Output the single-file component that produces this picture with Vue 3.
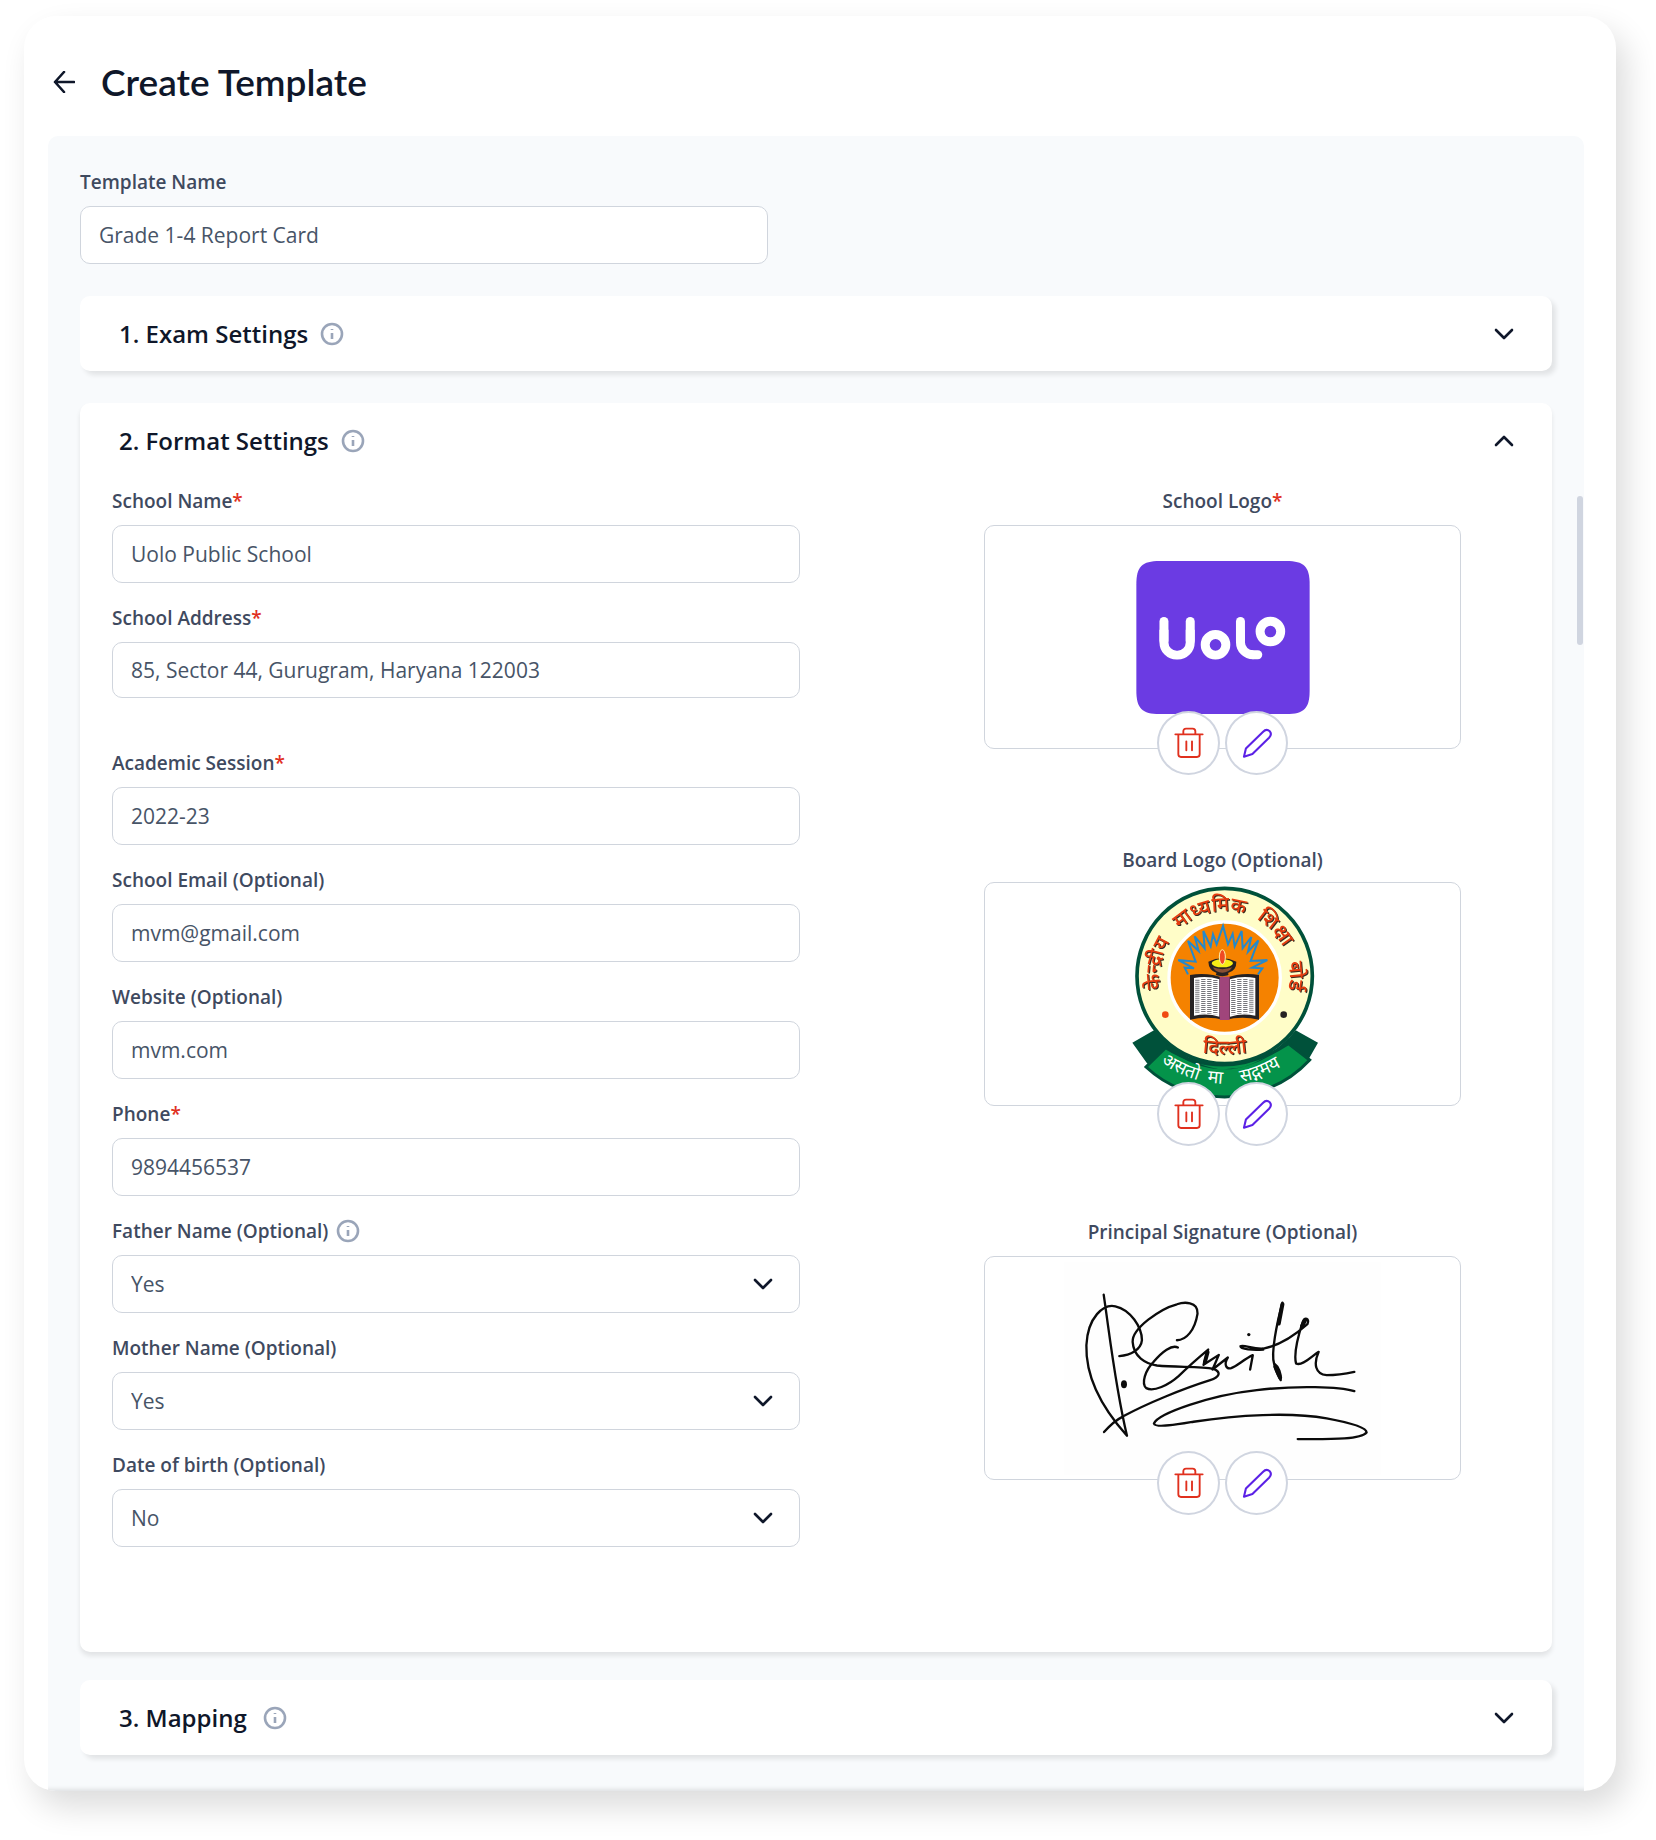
<template>
  <main class="template-page">
    <header class="page-header">
      <button class="back-btn" type="button" aria-label="Go back">
        <svg viewBox="0 0 22 22" width="22" height="22">
          <path d="M21 11H2M11 1L2 11l9 10" />
        </svg>
      </button>
      <h1>Create Template</h1>
    </header>

    <form class="panel" @submit.prevent>
      <div class="field template-name">
        <label for="templateName">Template Name</label>
        <input id="templateName" v-model="form.templateName" type="text" />
      </div>

      <section class="card">
        <button class="card-header" type="button" aria-expanded="false">
          <span>1. Exam Settings</span>
          <svg class="info" viewBox="0 0 24 24">
            <circle cx="12" cy="12" r="10" />
            <path d="M12 11v6M12 7v1" />
          </svg>
          <svg class="chevron" viewBox="0 0 20 12"><path d="M2 2l8 8 8-8" /></svg>
        </button>
      </section>

      <section class="card card-open">
        <button class="card-header" type="button" aria-expanded="true">
          <span>2. Format Settings</span>
          <svg class="info" viewBox="0 0 24 24">
            <circle cx="12" cy="12" r="10" />
            <path d="M12 11v6M12 7v1" />
          </svg>
          <svg class="chevron" viewBox="0 0 20 12"><path d="M2 10l8-8 8 8" /></svg>
        </button>

        <div class="card-body">
          <div class="fields">
            <div v-for="field in fields" :key="field.key" class="field" :class="field.key">
              <label :for="field.key">
                <span>{{ field.label }}<b v-if="field.required">*</b></span>
                <svg v-if="field.info" class="info" viewBox="0 0 24 24">
                  <circle cx="12" cy="12" r="10" />
                  <path d="M12 11v6M12 7v1" />
                </svg>
              </label>
              <div v-if="field.options" class="select-wrap">
                <select :id="field.key" v-model="form[field.key]">
                  <option v-for="option in field.options" :key="option">{{ option }}</option>
                </select>
                <svg class="chevron" viewBox="0 0 20 12"><path d="M2 2l8 8 8-8" /></svg>
              </div>
              <input v-else :id="field.key" v-model="form[field.key]" :type="field.type" />
            </div>
          </div>

          <div class="uploads">
            <div v-for="upload in uploads" :key="upload.key" class="upload" :class="upload.key">
              <h3>{{ upload.label }}<b v-if="upload.required">*</b></h3>
              <div class="preview">
                <!-- Uolo mark -->
                <svg
                  v-if="upload.key === 'school-logo'"
                  class="school-mark"
                  viewBox="528 273 521 460"
                  role="img"
                  aria-label="Uolo"
                >
                  <defs>
                    <clipPath id="bowl"><rect x="590" y="480" width="130" height="100" /></clipPath>
                    <clipPath id="hook"><rect x="820" y="480" width="60" height="100" /></clipPath>
                  </defs>
                  <path
                    fill="#6b3be3"
                    d="M598 273H979C1032 273 1049 290 1049 343V663C1049 716 1032 733 979 733H598C545 733 528 716 528 663V343C528 290 545 273 598 273Z"
                  />
                  <g fill="none" stroke="#fff" stroke-width="27" stroke-linecap="round">
                    <line x1="611" y1="455" x2="611" y2="512" />
                    <line x1="690" y1="455" x2="690" y2="512" />
                    <rect x="611" y="420" width="79" height="136" rx="38" clip-path="url(#bowl)" />
                    <circle cx="766" cy="525" r="31" />
                    <line x1="841" y1="455" x2="841" y2="512" />
                    <rect x="841" y="420" width="90" height="135" rx="38" clip-path="url(#hook)" />
                    <line x1="880" y1="555" x2="893" y2="555" />
                    <circle cx="931" cy="485" r="31" />
                  </g>
                </svg>

                <!-- Board emblem -->
                <svg
                  v-else-if="upload.key === 'board-logo'"
                  class="board-mark"
                  viewBox="52 45 570 648"
                  role="img"
                  aria-label="Board emblem"
                >
                  <defs>
                    <path id="ring" d="M342 510A195 195 0 0 1 342 120A195 195 0 0 1 342 510" />
                    <path id="cityLine" d="M240 538Q342 562 444 536" />
                    <path id="mottoLine" d="M140 568Q340 710 545 564" />
                  </defs>
                  <path fill="#00513a" d="M65 515L130 478L200 540L110 578ZM622 515L555 478L500 540L592 568Z" />
                  <path
                    fill="#04934a"
                    stroke="#00513a"
                    stroke-width="9"
                    d="M165 530Q342 640 533 518L597 567Q500 672 342 678Q200 676 106 588Z"
                  />
                  <path fill="#00513a" d="M165 500Q340 690 535 500L530 520Q342 665 168 530Z" />
                  <circle cx="342" cy="315" r="263" fill="#fffdc8" stroke="#00513a" stroke-width="11" />
                  <circle cx="342" cy="320" r="167" fill="#f58200" stroke="#fff" stroke-width="10" />
                  <polyline
                    fill="none"
                    stroke="#2489cc"
                    stroke-width="6"
                    points="232,310 222,290 250,292 203,267 255,272 232,210 264,240 252,196 282,232 278,180 300,226 307,190 318,220 337,165 352,220 366,188 372,226 393,180 396,232 422,198 412,242 443,208 420,270 470,267 424,290 455,292 442,310"
                  />
                  <path fill="#262223" d="M238 312Q290 302 342 322Q394 302 445 312V446Q394 434 342 447Q290 434 238 446Z" />
                  <path fill="#fff" d="M250 321Q290 313 326 325V437Q290 426 250 434ZM358 325Q394 313 434 321V434Q394 426 358 437Z" />
                  <g stroke="#77777c" stroke-width="13" stroke-dasharray="3 3">
                    <path d="M260 326V428M278 324V427M296 324V428M314 327V430M368 327V430M386 324V428M404 324V427M422 326V428" />
                  </g>
                  <path fill="#a0457b" d="M327 317H357V447H327Z" />
                  <path fill="#262223" d="M293 272Q335 252 377 272Q378 298 352 306Q360 314 335 316Q308 314 318 306Q294 298 293 272Z" />
                  <path fill="#8a5033" d="M306 289Q335 300 365 289Q354 305 335 305Q316 305 306 289Z" />
                  <ellipse cx="335" cy="277" rx="32" ry="12" fill="#f7ee16" />
                  <ellipse cx="335" cy="258" rx="9" ry="22" fill="#f04a23" stroke="#fff3b0" stroke-width="3" />
                  <g class="ring-text" text-anchor="middle">
                    <text><textPath href="#ring" startOffset="342">केन्द्रीय</textPath></text>
                    <text><textPath href="#ring" startOffset="568">माध्यमिक</textPath></text>
                    <text><textPath href="#ring" startOffset="770">शिक्षा</textPath></text>
                    <text><textPath href="#ring" startOffset="918">बोर्ड</textPath></text>
                    <text><textPath href="#cityLine" startOffset="50%">दिल्ली</textPath></text>
                  </g>
                  <g class="motto" text-anchor="middle">
                    <text><textPath href="#mottoLine" startOffset="17%">असतो</textPath></text>
                    <text><textPath href="#mottoLine" startOffset="43%">मा</textPath></text>
                    <text><textPath href="#mottoLine" startOffset="76%">सद्गमय</textPath></text>
                  </g>
                  <circle cx="164" cy="431" r="10" fill="#f04a12" />
                  <circle cx="519" cy="431" r="10" fill="#262223" />
                </svg>

                <!-- Handwritten signature -->
                <svg v-else class="signature-mark" viewBox="42 65 950 640" role="img" aria-label="Signature">
                  <rect x="42" y="65" width="950" height="640" fill="#fefefe" />
                  <g fill="none" stroke="#0b0b0b" stroke-width="7" stroke-linecap="round" stroke-linejoin="round">
                    <path
                      d="M160 163C180 300 195 440 230 587C170 520 105 425 108 315C112 230 160 190 195 198C240 208 275 260 275 300C272 330 240 345 207 348"
                    />
                    <path
                      d="M380 300C408 300 434 270 442 220C444 182 400 185 380 192C330 205 245 265 247 305C250 350 285 370 320 376C380 382 450 378 490 386C515 396 508 412 480 420C400 445 290 490 220 528C190 543 175 560 161 576"
                    />
                    <path
                      d="M383 322C365 312 335 335 310 365C285 390 272 430 288 444C310 456 355 435 385 408C415 378 450 348 474 328L460 374L506 344L487 388L533 352C520 372 528 388 543 384C560 378 585 355 608 345L600 388"
                    />
                    <path d="M697 187C680 250 662 340 672 370C676 395 688 412 692 420C694 400 686 380 672 370" />
                    <path
                      d="M640 328C610 330 570 328 571 318C580 312 610 328 640 325C690 316 735 285 772 252C780 234 764 230 758 245C745 285 730 340 738 370C755 380 785 348 806 335C790 370 795 402 830 405C860 405 890 400 913 395"
                    />
                    <path
                      d="M913 453C870 440 740 435 620 450C480 465 325 520 311 550C315 566 400 550 430 545C560 525 720 515 830 535C900 548 950 562 950 577C930 600 830 597 743 597"
                    />
                  </g>
                  <path stroke="#0b0b0b" stroke-width="12" stroke-linecap="round" d="M697 192L686 250M765 240L756 258M676 380L690 412M464 366L472 336" />
                  <ellipse cx="221" cy="432" rx="9" ry="12" fill="#0b0b0b" />
                  <circle cx="596" cy="283" r="5" fill="#0b0b0b" />
                </svg>

                <div class="preview-actions">
                  <button class="round-btn delete" type="button" :aria-label="'Delete ' + upload.label">
                    <svg viewBox="0 0 90 96" width="30" height="32">
                      <path
                        d="M4 22H86M28 22V13Q28 5 36 5H56Q64 5 64 13V22M13 22V82Q13 90 21 90H69Q77 90 77 82V22M37 43V70M54 43V70"
                      />
                    </svg>
                  </button>
                  <button class="round-btn edit" type="button" :aria-label="'Edit ' + upload.label">
                    <svg viewBox="0 0 90 92" width="30" height="30">
                      <path d="M5 88L11 63L63 12Q74 1 84 10Q92 19 82 30L31 80Z" />
                    </svg>
                  </button>
                </div>
              </div>
            </div>
          </div>
        </div>
      </section>

      <section class="card">
        <button class="card-header" type="button" aria-expanded="false">
          <span>3. Mapping</span>
          <svg class="info info-wide" viewBox="0 0 24 24">
            <circle cx="12" cy="12" r="10" />
            <path d="M12 11v6M12 7v1" />
          </svg>
          <svg class="chevron" viewBox="0 0 20 12"><path d="M2 2l8 8 8-8" /></svg>
        </button>
      </section>

      <div class="scroll-thumb"></div>
    </form>
  </main>
</template>

<script setup>
import { reactive } from 'vue'

const form = reactive({
  templateName: 'Grade 1-4 Report Card',
  schoolName: 'Uolo Public School',
  schoolAddress: '85, Sector 44, Gurugram, Haryana 122003',
  academicSession: '2022-23',
  schoolEmail: 'mvm@gmail.com',
  website: 'mvm.com',
  phone: '9894456537',
  fatherName: 'Yes',
  motherName: 'Yes',
  dateOfBirth: 'No',
})

const yesNo = ['Yes', 'No']

const fields = [
  { key: 'schoolName', label: 'School Name', type: 'text', required: true },
  { key: 'schoolAddress', label: 'School Address', type: 'text', required: true },
  { key: 'academicSession', label: 'Academic Session', type: 'text', required: true },
  { key: 'schoolEmail', label: 'School Email (Optional)', type: 'email' },
  { key: 'website', label: 'Website (Optional)', type: 'text' },
  { key: 'phone', label: 'Phone', type: 'tel', required: true },
  { key: 'fatherName', label: 'Father Name (Optional)', options: yesNo, info: true },
  { key: 'motherName', label: 'Mother Name (Optional)', options: yesNo },
  { key: 'dateOfBirth', label: 'Date of birth (Optional)', options: yesNo },
]

const uploads = [
  { key: 'school-logo', label: 'School Logo', required: true },
  { key: 'board-logo', label: 'Board Logo (Optional)' },
  { key: 'signature', label: 'Principal Signature (Optional)' },
]
</script>

<style>
body {
  margin: 0;
  background: #ffffff;
}
</style>

<style scoped>
* {
  box-sizing: border-box;
}

.template-page {
  margin: 16px 40px 49px 24px;
  padding: 0 32px 0 24px;
  overflow: hidden;
  border-radius: 32px;
  background: #ffffff;
  box-shadow: 10px 16px 32px rgba(0, 0, 0, 0.14);
  color: #0f172a;
  font-family: "Open Sans", "Noto Sans", sans-serif;
}

.page-header {
  display: flex;
  align-items: center;
  gap: 26px;
  height: 120px;
  padding: 11px 4px 0 5px;
}

h1 {
  margin: 0;
  font-family: Lato, sans-serif;
  font-size: 37px;
  font-weight: 600;
  line-height: 48px;
}

button {
  padding: 0;
  border: none;
  background: none;
  color: inherit;
  font-family: inherit;
  cursor: pointer;
}

.back-btn {
  display: flex;
}

svg {
  flex: none;
}

.back-btn path,
.chevron path {
  fill: none;
  stroke: #0f172a;
  stroke-width: 2.6;
  stroke-linecap: round;
  stroke-linejoin: round;
}

.panel {
  position: relative;
  padding: 34px 32px 36px;
  border-radius: 10px 10px 0 0;
  background: #f8fafc;
  box-shadow: inset 0 -6px 4px -4px rgba(0, 0, 0, 0.1);
}

.field {
  display: grid;
  gap: 12px;
}

.template-name {
  width: 49%;
  min-width: 280px;
  max-width: 688px;
  margin-bottom: 32px;
}

label,
h3 {
  margin: 0;
  color: #3f4a5f;
  font-size: 19px;
  font-weight: 600;
  line-height: 24px;
}

label {
  display: flex;
  align-items: center;
  gap: 8px;
}

label b,
h3 b {
  color: #e0301e;
  font-weight: 600;
}

input,
select {
  width: 100%;
  height: 58px;
  padding: 0 18px;
  border: 1px solid #d0d5dd;
  border-radius: 10px;
  outline: none;
  background: #ffffff;
  color: #475467;
  font-family: inherit;
  font-size: 21px;
}

select {
  appearance: none;
}

input:focus,
select:focus {
  border-color: #6b3be3;
}

.select-wrap {
  position: relative;
}

.select-wrap .chevron {
  position: absolute;
  top: 23px;
  right: 27px;
  pointer-events: none;
}

.info {
  width: 24px;
  height: 24px;
  fill: none;
  stroke: #9aa5b9;
  stroke-width: 2.6;
}

.chevron {
  width: 20px;
  height: 12px;
}

.card {
  margin-bottom: 32px;
  border-radius: 10px;
  background: #ffffff;
  box-shadow: 4px 4px 5px rgba(0, 0, 0, 0.09);
}

.card:last-of-type {
  margin-bottom: 0;
}

.card-open {
  margin-bottom: 28px;
  box-shadow: 0 4px 5px rgba(0, 0, 0, 0.09);
}

.card-header {
  display: flex;
  align-items: center;
  gap: 12px;
  width: 100%;
  height: 75px;
  padding: 0 38px 0 39px;
  font-size: 24px;
  font-weight: 600;
  text-align: left;
}

.card-header .chevron {
  margin-left: auto;
}

.info-wide {
  margin-left: 4px;
}

.card-body {
  display: grid;
  grid-template-columns: minmax(0, 688fr) minmax(0, 477fr);
  column-gap: 184px;
  padding: 11px 91px 105px 32px;
}

.fields {
  display: grid;
  gap: 23px;
  align-content: start;
}

.schoolAddress {
  margin-bottom: 30px;
}

.schoolAddress input {
  height: 56px;
}

.upload {
  display: grid;
  gap: 12px;
  text-align: center;
}

.board-logo {
  gap: 10px;
  margin: 99px 0 114px;
}

.preview {
  position: relative;
  display: flex;
  align-items: center;
  justify-content: center;
  height: 224px;
  border: 1px solid #d0d5dd;
  border-radius: 10px;
}

.school-mark {
  width: 174px;
  height: 153px;
}

.board-mark {
  width: 190px;
  height: 216px;
}

.signature-mark {
  width: 317px;
  height: 213px;
}

.ring-text {
  fill: #e63c0f;
  font-size: 60px;
  font-weight: 500;
  filter: drop-shadow(3px 3px 0 #3b2a20);
}

.motto {
  fill: #ffffff;
  font-size: 54px;
  font-weight: 400;
}

.preview-actions {
  position: absolute;
  bottom: -27px;
  left: 0;
  display: flex;
  justify-content: center;
  gap: 5px;
  width: 100%;
}

.board-logo .preview-actions {
  bottom: -41px;
}

.signature .preview-actions {
  bottom: -36px;
}

.round-btn {
  display: flex;
  align-items: center;
  justify-content: center;
  width: 63px;
  height: 64px;
  border: 2px solid #d0d5e0;
  border-radius: 50%;
  background: #ffffff;
}

.round-btn path {
  fill: none;
  stroke: #e0301e;
  stroke-width: 5.6;
  stroke-linecap: round;
  stroke-linejoin: round;
}

.edit path {
  stroke: #5b21e6;
  stroke-width: 6.4;
}

.scroll-thumb {
  position: absolute;
  top: 360px;
  right: 1px;
  width: 6px;
  height: 149px;
  border-radius: 3px;
  background: #d0d5e0;
}
</style>
